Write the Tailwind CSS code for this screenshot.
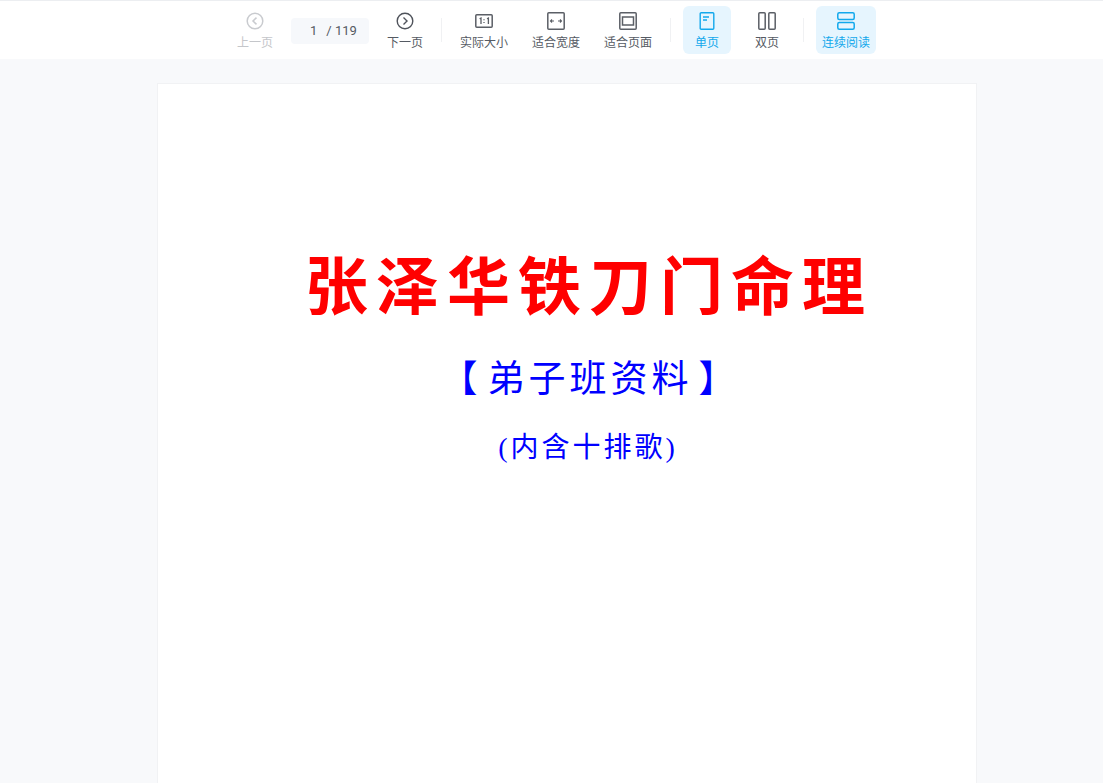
<!DOCTYPE html>
<html lang="zh-CN">
<head>
  <meta charset="UTF-8" />
  <title>文档阅读</title>
  <script src="https://cdn.jsdelivr.net/npm/@tailwindcss/browser@4"></script>
</head>
<body class="h-[783px] overflow-hidden bg-[#f8f9fb] font-['Roboto','Noto_Sans_CJK_SC',sans-serif]">

  <!-- Toolbar -->
  <header class="h-[59px] bg-white border-t border-[#eceef1] pl-[231px] flex items-center text-xs text-[#555a63]">
    <button class="w-12 h-12 flex flex-col items-center justify-between py-[3px] text-[#c4c6ca]">
      <svg class="w-[18px] h-[18px] mt-[3px]" viewBox="0 0 18 18" fill="none" stroke="#c9cbcf" stroke-width="1.500"><circle cx="9" cy="9" r="7.800"/><path d="M10.500 5.600 7 9l3.500 3.400"/></svg>
      <span>上一页</span>
    </button>
    <div class="ml-3 mt-[2px] w-[78px] h-[26px] bg-[#f6f8fb] rounded flex items-center pl-[19px] text-[13px] text-[#555a63]">
      <span>1</span><span class="ml-[9px]">/ 119</span>
    </div>
    <button class="ml-3 w-12 h-12 flex flex-col items-center justify-between py-[3px]">
      <svg class="w-[18px] h-[18px] mt-[3px]" viewBox="0 0 18 18" fill="none" stroke="#4f535b" stroke-width="1.400"><circle cx="9" cy="9" r="7.800"/><path d="M7.500 5.600 11 9l-3.500 3.400"/></svg>
      <span>下一页</span>
    </button>
    <div class="ml-3 w-px h-6 bg-[#f0f1f3]"></div>

    <button class="ml-[18px] w-12 h-12 flex flex-col items-center justify-between py-[3px]">
      <svg class="w-[18px] h-[18px] mt-[3px]" viewBox="0 0 18 18" fill="none" stroke="#5b5f66" stroke-width="1.500"><rect x="0.800" y="2.800" width="16.400" height="12.400" rx="1"/><path stroke-width="1.300" d="M4.600 6.800 6 6v6M12 6.800 13.400 6v6M9 7.200v1M9 10v1"/></svg>
      <span>实际大小</span>
    </button>
    <button class="ml-6 w-12 h-12 flex flex-col items-center justify-between py-[3px]">
      <svg class="w-[18px] h-[18px] mt-[3px]" viewBox="0 0 18 18" fill="none" stroke="#5b5f66" stroke-width="1.500"><rect x="0.800" y="0.800" width="16.400" height="16.400" rx="1"/><path stroke-width="1.100" d="M3.500 9h3.500M11 9h3.500M5 7.500 3.500 9 5 10.500M13 7.500 14.500 9 13 10.500"/></svg>
      <span>适合宽度</span>
    </button>
    <button class="ml-6 w-12 h-12 flex flex-col items-center justify-between py-[3px]">
      <svg class="w-[18px] h-[18px] mt-[3px]" viewBox="0 0 18 18" fill="none" stroke="#5b5f66" stroke-width="1.500"><rect x="0.800" y="0.800" width="16.400" height="16.400" rx="1"/><rect x="3.500" y="5" width="11" height="8"/></svg>
      <span>适合页面</span>
    </button>
    <div class="ml-[18px] w-px h-6 bg-[#f0f1f3]"></div>

    <button class="ml-3 w-12 h-12 flex flex-col items-center justify-between py-[3px] rounded-md bg-[#e6f5fe] text-[#12a8ec]">
      <svg class="w-[18px] h-[18px] mt-[3px]" viewBox="0 0 18 18" fill="none" stroke="#12a8ec" stroke-width="1.400"><rect x="2.200" y="0.700" width="13.600" height="16.600" rx="1"/><path d="M5 5h6M5 8h4"/></svg>
      <span>单页</span>
    </button>
    <button class="ml-3 w-12 h-12 flex flex-col items-center justify-between py-[3px]">
      <svg class="w-[18px] h-[18px] mt-[3px]" viewBox="0 0 18 18" fill="none" stroke="#5b5f66" stroke-width="1.500"><rect x="0.800" y="0.800" width="6.400" height="16.400" rx="1"/><rect x="10.800" y="0.800" width="6.400" height="16.400" rx="1"/></svg>
      <span>双页</span>
    </button>
    <div class="ml-3 w-px h-6 bg-[#f0f1f3]"></div>
    <button class="ml-3 w-[60px] h-12 flex flex-col items-center justify-between py-[3px] rounded-md bg-[#e6f5fe] text-[#12a8ec]">
      <svg class="w-[18px] h-[18px] mt-[3px]" viewBox="0 0 18 18" fill="none" stroke="#12a8ec" stroke-width="1.500"><rect x="0.800" y="0.800" width="16.400" height="6.800" rx="1.500"/><rect x="0.800" y="10.400" width="16.400" height="6.800" rx="1.500"/></svg>
      <span>连续阅读</span>
    </button>
  </header>

  <!-- Page -->
  <main class="ml-[157px] mt-[24px] w-[820px] h-[720px] bg-white border border-[#f1f2f4] pt-[164px] pl-[147px]">
    <h1 class="w-[570px] text-[63px] leading-[80px] font-bold text-[#ff0000] tracking-[8px] whitespace-nowrap">张泽华铁刀门命理</h1>
    <p class="mt-[28px] w-[570px] flex justify-center gap-[6px] text-[37px] leading-[48px] text-[#0000ff] tracking-[4px] whitespace-nowrap"><span>【</span><span>弟子班资料</span><span>】</span></p>
    <p class="mt-[24px] w-[566px] text-center text-[28px] leading-[40px] text-[#0000ff] tracking-[3px] whitespace-nowrap font-['Liberation_Serif','Noto_Sans_CJK_SC',serif]">(内含十排歌)</p>
  </main>
</body>
</html>
